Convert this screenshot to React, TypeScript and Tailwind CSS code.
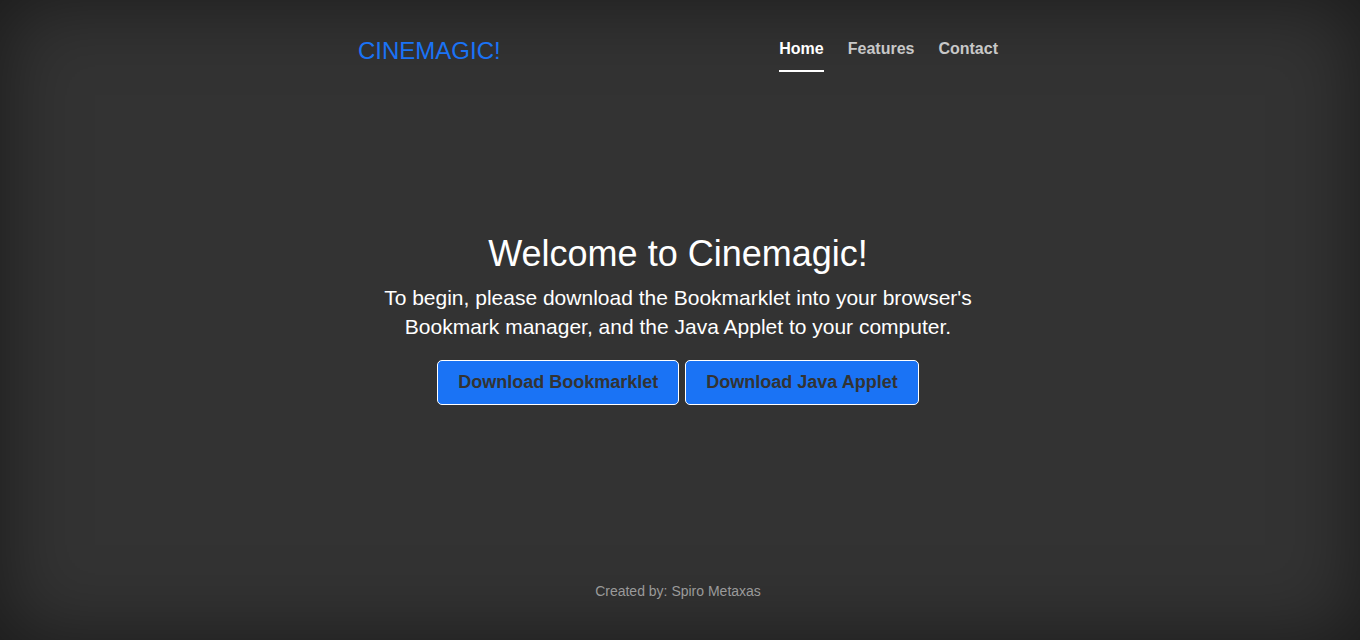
export default function App() {
  const links = ["Home", "Features", "Contact"]

  return (
    <div className="h-[640px] w-full bg-[#333333] shadow-[inset_0_0_5rem_rgba(0,0,0,0.5)] pr-1 text-white font-['Liberation_Sans',Arial,sans-serif]">
      <div className="mx-auto flex h-full w-[640px] flex-col">
        <header className="flex items-start justify-between pt-[36px]">
          <h3 className="text-[24px] leading-[30px] text-[#1a73f5]">CINEMAGIC!</h3>
          <nav className="flex gap-6 pt-[3px]">
            {links.map((link, index) => (
              <a
                key={index}
                href="#"
                className={
                  index === 0
                    ? "border-b-2 border-white pb-[11px] text-[16px] font-bold leading-[20px] text-white"
                    : "border-b-2 border-transparent pb-[11px] text-[16px] font-bold leading-[20px] text-[#c8c8c8]"
                }
              >
                {link}
              </a>
            ))}
          </nav>
        </header>

        <main className="flex flex-col items-center pt-[160px] text-center">
          <h1 className="text-[36px] leading-[44px]">Welcome to Cinemagic!</h1>
          <p className="mt-[7px] text-[21px] leading-[29px]">
            To begin, please download the Bookmarklet into your browser's
            <br />
            Bookmark manager, and the Java Applet to your computer.
          </p>
          <div className="mt-[19px] flex gap-[6px]">
            <button className="h-[45px] rounded-[5px] border border-white bg-[#1a73f5] px-5 text-[18px] font-bold text-[#333333]">
              Download Bookmarklet
            </button>
            <button className="h-[45px] rounded-[5px] border border-white bg-[#1a73f5] px-5 text-[18px] font-bold text-[#333333]">
              Download Java Applet
            </button>
          </div>
        </main>

        <footer className="mt-auto pb-[38px] text-center text-[14px] text-[#9a9a9a]">
          Created by: Spiro Metaxas
        </footer>
      </div>
    </div>
  )
}
